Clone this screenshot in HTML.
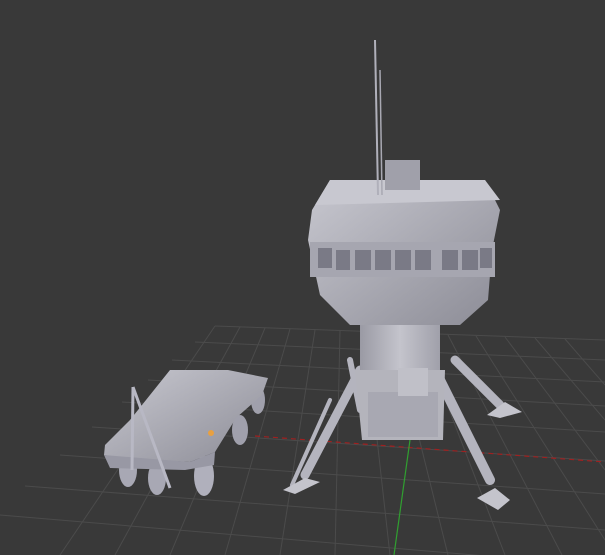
<!DOCTYPE html>
<html><head><style>html,body{margin:0;padding:0;background:#393939;width:605px;height:555px;overflow:hidden}</style></head>
<body>
<svg width="605" height="555" viewBox="0 0 605 555" xmlns="http://www.w3.org/2000/svg">
<defs>
<linearGradient id="g1" x1="0" y1="0" x2="1" y2="1"><stop offset="0" stop-color="#c8c8d0"/><stop offset="1" stop-color="#8c8c96"/></linearGradient>
<linearGradient id="g2" x1="0" y1="0" x2="1" y2="0"><stop offset="0" stop-color="#9a9aa4"/><stop offset="0.5" stop-color="#c4c4cc"/><stop offset="1" stop-color="#a0a0aa"/></linearGradient>
</defs>
<rect width="605" height="555" fill="#393939"/>
<g stroke="#4b4b4b" stroke-width="1" fill="none">
<line x1="215" y1="326" x2="605" y2="340"/>
<line x1="195" y1="342" x2="605" y2="360"/>
<line x1="172" y1="360" x2="605" y2="382"/>
<line x1="148" y1="380" x2="605" y2="406"/>
<line x1="122" y1="402" x2="605" y2="432"/>
<line x1="92" y1="427" x2="605" y2="461"/>
<line x1="60" y1="455" x2="605" y2="494"/>
<line x1="25" y1="486" x2="605" y2="530"/>
<line x1="0" y1="515" x2="605" y2="566"/>
<line x1="215" y1="326" x2="60" y2="555"/>
<line x1="240" y1="327" x2="115" y2="555"/>
<line x1="265" y1="328" x2="170" y2="555"/>
<line x1="290" y1="329" x2="225" y2="555"/>
<line x1="315" y1="330" x2="280" y2="555"/>
<line x1="340" y1="331" x2="335" y2="555"/>
<line x1="365" y1="332" x2="390" y2="555"/>
<line x1="393" y1="333" x2="448" y2="555"/>
<line x1="420" y1="334" x2="505" y2="555"/>
<line x1="448" y1="335" x2="562" y2="555"/>
<line x1="476" y1="336" x2="605" y2="540"/>
<line x1="505" y1="337" x2="605" y2="470"/>
<line x1="535" y1="338" x2="605" y2="420"/>
<line x1="565" y1="339" x2="605" y2="385"/>
</g>
<line x1="255" y1="436" x2="605" y2="462" stroke="#a02020" stroke-width="1.2" stroke-dasharray="5,4"/>
<line x1="410" y1="440" x2="394" y2="555" stroke="#30a030" stroke-width="1.2"/>
<!-- cart -->
<g>
<ellipse cx="128" cy="470" rx="9" ry="17" fill="#a8a8b4"/>
<ellipse cx="157" cy="478" rx="9" ry="17" fill="#a8a8b4"/>
<ellipse cx="204" cy="476" rx="10" ry="20" fill="#b0b0bc"/>
<ellipse cx="240" cy="430" rx="8" ry="15" fill="#a0a0ac"/>
<ellipse cx="258" cy="400" rx="7" ry="14" fill="#a0a0ac"/>
<polygon points="170,370 228,370 268,378 262,395 236,418 215,452 190,462 120,458 104,455 105,445 130,420" fill="url(#g1)"/>
<polygon points="104,455 190,462 215,452 214,465 185,470 110,468" fill="#9898a4"/>
<line x1="133" y1="387" x2="170" y2="488" stroke="#b8b8c4" stroke-width="3"/>
<line x1="133" y1="387" x2="132" y2="470" stroke="#b8b8c4" stroke-width="3"/>
<circle cx="211" cy="433" r="3" fill="#e8a040"/>
</g>
<!-- lander legs -->
<g stroke="#b4b4be" stroke-linecap="round">
<line x1="360" y1="370" x2="305" y2="475" stroke-width="9"/>
<line x1="330" y1="400" x2="292" y2="485" stroke-width="4"/>
<line x1="440" y1="380" x2="490" y2="480" stroke-width="10"/>
<line x1="455" y1="360" x2="500" y2="405" stroke-width="9"/>
<line x1="350" y1="360" x2="360" y2="410" stroke-width="6"/>
</g>
<polygon points="283,490 305,478 320,482 295,494" fill="#c4c4cc"/>
<polygon points="477,498 495,488 510,500 498,510" fill="#c4c4cc"/>
<polygon points="487,415 505,402 522,412 500,418" fill="#c4c4cc"/>
<!-- lower body -->
<rect x="360" y="320" width="80" height="50" fill="url(#g2)"/>
<polygon points="355,370 445,370 443,440 362,440" fill="#b4b4bc"/>
<rect x="368" y="392" width="70" height="45" fill="#a8a8b2"/>
<rect x="398" y="368" width="30" height="28" fill="#c0c0c8"/>
<!-- upper body -->
<polygon points="330,180 485,180 500,210 492,250 488,300 460,325 350,325 320,295 308,240 312,210" fill="url(#g1)"/>
<rect x="310" y="242" width="185" height="35" fill="#a6a6b0"/>
<g fill="#7a7a86">
<rect x="318" y="248" width="14" height="20"/><rect x="336" y="250" width="14" height="20"/>
<rect x="355" y="250" width="16" height="20"/><rect x="375" y="250" width="16" height="20"/>
<rect x="395" y="250" width="16" height="20"/><rect x="415" y="250" width="16" height="20"/>
<rect x="442" y="250" width="16" height="20"/><rect x="462" y="250" width="16" height="20"/>
<rect x="480" y="248" width="12" height="20"/>
</g>
<polygon points="330,180 485,180 500,200 315,205" fill="#c8c8d0"/>
<rect x="385" y="160" width="35" height="30" fill="#a0a0aa"/>
<line x1="375" y1="40" x2="378" y2="195" stroke="#b0b0ba" stroke-width="2"/>
<line x1="380" y1="70" x2="382" y2="195" stroke="#a8a8b2" stroke-width="1.5"/>
</svg>
</body></html>
